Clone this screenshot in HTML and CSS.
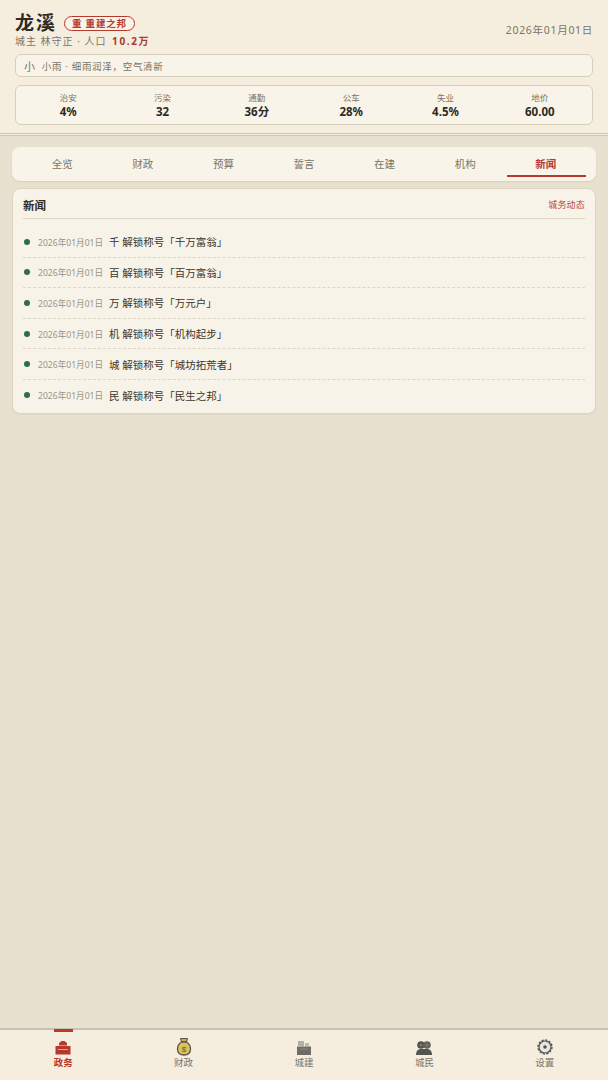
FILE: index.html
```html
<!DOCTYPE html>
<html lang="zh">
<head>
    <meta charset="utf-8">
    <title>龙溪</title>
    <link rel="stylesheet" href="styles.css">
</head>
<body>
    <div class="app">
        <header class="top">
            <div class="top-row">
                <div>
                    <div class="title-line">
                        <span class="city">龙溪</span>
                        <span class="badge">重 重建之邦</span>
                    </div>
                    <div class="sub">城主 林守正 · 人口 <b>10.2万</b></div>
                </div>
                <div class="date">2026年01月01日</div>
            </div>
            <div class="weather"><span class="weather-icon">小</span>小雨 · 细雨润泽，空气清新</div>
            <div class="stats">
                <div class="stat"><span>治安</span><b>4%</b></div>
                <div class="stat"><span>污染</span><b>32</b></div>
                <div class="stat"><span>通勤</span><b>36分</b></div>
                <div class="stat"><span>公车</span><b>28%</b></div>
                <div class="stat"><span>失业</span><b>4.5%</b></div>
                <div class="stat"><span>地价</span><b>60.00</b></div>
            </div>
        </header>

        <main class="content">
            <nav class="tabs">
                <div class="tab">全览</div>
                <div class="tab">财政</div>
                <div class="tab">预算</div>
                <div class="tab">誓言</div>
                <div class="tab">在建</div>
                <div class="tab">机构</div>
                <div class="tab active">新闻</div>
            </nav>

            <section class="panel">
                <div class="panel-head">
                    <h3>新闻</h3>
                    <span>城务动态</span>
                </div>
                <div class="news">
                    <div class="row"><i></i><span class="when">2026年01月01日</span><span class="what">千 解锁称号「千万富翁」</span></div>
                    <div class="row"><i></i><span class="when">2026年01月01日</span><span class="what">百 解锁称号「百万富翁」</span></div>
                    <div class="row"><i></i><span class="when">2026年01月01日</span><span class="what">万 解锁称号「万元户」</span></div>
                    <div class="row"><i></i><span class="when">2026年01月01日</span><span class="what">机 解锁称号「机构起步」</span></div>
                    <div class="row"><i></i><span class="when">2026年01月01日</span><span class="what">城 解锁称号「城坊拓荒者」</span></div>
                    <div class="row"><i></i><span class="when">2026年01月01日</span><span class="what">民 解锁称号「民生之邦」</span></div>
                </div>
            </section>
        </main>

        <footer class="nav">
            <div class="nav-item on">
                <svg width="18" height="18" viewBox="0 0 18 18">
                    <path d="M5 5.500 C5.500 4 7 4 7.500 3 H10.500 C11 4 12.500 4 13 5.500 V7.500 H5 Z" fill="#b5392c"/>
                    <path d="M1.500 8 H16.500 V16.500 H1.500 Z" fill="#b5392c"/>
                    <rect x="4" y="11" width="10" height="1" fill="#e3a898"/>
                </svg>
                <span>政务</span>
            </div>
            <div class="nav-item">
                <svg width="18" height="18" viewBox="0 0 18 18">
                    <path d="M5.500 0.500 H12.500 L11.500 4 H6.500 Z" fill="#c9ab55" stroke="#5c5545" stroke-width="1"/>
                    <path d="M6.500 4 H11.500 C14.500 6 15.500 8.500 15.500 11 C15.500 15 13 17 9 17 C5 17 2.500 15 2.500 11 C2.500 8.500 3.500 6 6.500 4 Z" fill="#dcc25c" stroke="#5c5545" stroke-width="1.300"/>
                    <text x="9" y="13.500" font-size="8" text-anchor="middle" fill="#6b5a20" font-family="Liberation Sans">$</text>
                </svg>
                <span>财政</span>
            </div>
            <div class="nav-item">
                <svg width="18" height="18" viewBox="0 0 18 18">
                    <rect x="3" y="3" width="6" height="5" fill="#b3afa4"/>
                    <rect x="10" y="5" width="4" height="3" fill="#bdb9ae"/>
                    <rect x="2" y="8.500" width="14" height="8.500" fill="#6f6c66"/>
                    <rect x="4.500" y="10.500" width="9" height="1" fill="#8d8a83"/>
                </svg>
                <span>城建</span>
            </div>
            <div class="nav-item">
                <svg width="18" height="18" viewBox="0 0 18 18">
                    <circle cx="6" cy="7" r="3.800" fill="#55534f"/>
                    <circle cx="12" cy="7" r="3.800" fill="#65635e"/>
                    <circle cx="6" cy="7" r="1.500" fill="#7c7a74"/>
                    <circle cx="12" cy="7" r="1.500" fill="#7c7a74"/>
                    <path d="M1 17 C1 13 3 11 6 11 H12 C15 11 17 13 17 17 Z" fill="#55534f"/>
                </svg>
                <span>城民</span>
            </div>
            <div class="nav-item">
                <svg width="18" height="18" viewBox="0 0 18 18">
                    <circle cx="9" cy="9" r="6" fill="#e8e6e0" stroke="#55534f" stroke-width="1.200"/>
                    <circle cx="9" cy="9" r="7" fill="none" stroke="#55534f" stroke-width="1.400" stroke-dasharray="2.200 1.460"/>
                    <circle cx="9" cy="9" r="1.800" fill="#55534f"/>
                </svg>
                <span>设置</span>
            </div>
        </footer>
    </div>
</body>
</html>
```

FILE: styles.css
```css
* {
    box-sizing: border-box;
}

body {
    margin: 0;
    font-family: "Noto Sans", "Noto Sans CJK SC", sans-serif;
    color: #2f2a22;
    background-color: #e8e1cf;
}

.app {
    display: flex;
    flex-direction: column;
    height: 1080px;
}

.top {
    height: 136px;
    padding: 11px 15px 0;
    background-color: #f5eedf;
    border-bottom: 3px double #cfc7b2;
}

.top-row {
    display: flex;
    justify-content: space-between;
    align-items: center;
    height: 37px;
}

.title-line {
    display: flex;
    align-items: center;
    gap: 7px;
    height: 24px;
}

.city {
    font-size: 19px;
    font-weight: 700;
    letter-spacing: 2px;
    line-height: 24px;
}

.badge {
    height: 15px;
    padding: 0 7px;
    font-size: 9.500px;
    font-weight: 700;
    line-height: 13px;
    letter-spacing: 0.8px;
    color: #b5392c;
    border: 1px solid #b5392c;
    border-radius: 8px;
    background-color: #f9f3e8;
}

.sub {
    font-size: 10px;
    line-height: 13px;
    letter-spacing: 1px;
    color: #7b7466;
}

.sub b {
    margin-left: 2px;
    color: #a93a2e;
    letter-spacing: 1.600px;
}

.date {
    font-size: 10.500px;
    color: #7b7466;
    letter-spacing: 0.7px;
}

.weather {
    display: flex;
    align-items: center;
    height: 23px;
    margin-top: 6px;
    padding-left: 8px;
    font-size: 9.500px;
    letter-spacing: 0.7px;
    color: #7b7466;
    background-color: #f8f4ea;
    border: 1px solid #d6cfba;
    border-radius: 6px;
}

.weather-icon {
    margin-right: 6px;
    font-size: 11px;
}

.stats {
    display: flex;
    height: 40px;
    margin-top: 8px;
    padding: 0 5px;
    background-color: #f8f4ea;
    border: 1px solid #d6cfba;
    border-radius: 6px;
}

.stat {
    flex: 1;
    display: flex;
    flex-direction: column;
    align-items: center;
    padding-top: 6px;
}

.stat span {
    font-size: 8.500px;
    line-height: 12px;
    color: #7b7466;
}

.stat b {
    font-size: 11.500px;
    line-height: 15px;
}

.content {
    flex: 1;
    padding: 11px 12px 0;
}

.tabs {
    display: flex;
    height: 34px;
    padding: 0 10px;
    background-color: #f8f4ea;
    border-radius: 8px;
    box-shadow: 0 1px 2px #d6cfba;
}

.tab {
    flex: 1;
    position: relative;
    font-size: 10.500px;
    line-height: 34px;
    text-align: center;
    color: #7b7466;
}

.tab.active {
    font-weight: 700;
    color: #b5392c;
}

.tab.active::after {
    content: "";
    position: absolute;
    left: 2px;
    right: 0;
    bottom: 4px;
    height: 2px;
    background-color: #b5392c;
}

.panel {
    height: 226px;
    margin-top: 7px;
    padding: 0 10px;
    background-color: #f8f3e9;
    border: 1px solid #ddd6c3;
    border-radius: 8px;
    box-shadow: 0 1px 1px #ddd6c3;
}

.panel-head {
    display: flex;
    justify-content: space-between;
    align-items: center;
    height: 30px;
    padding-top: 2px;
    border-bottom: 1px solid #ddd6c3;
}

.panel-head h3 {
    margin: 0;
    font-size: 11.500px;
    font-weight: 700;
}

.panel-head span {
    font-size: 9px;
    letter-spacing: 0.2px;
    color: #b5493c;
}

.news {
    padding-top: 8px;
}

.row {
    display: flex;
    align-items: center;
    height: 30.600px;
    border-bottom: 1px dashed #ddd6c3;
}

.row:last-child {
    border-bottom: none;
}

.row i {
    width: 6px;
    height: 6px;
    margin: 0 8px 0 1px;
    border-radius: 50%;
    background-color: #2f6b4f;
}

.when {
    width: 71px;
    padding-top: 1px;
    font-size: 8.600px;
    color: #9a9385;
}

.what {
    font-size: 10.500px;
    color: #3b362d;
}

.nav {
    display: flex;
    height: 52px;
    padding: 0 3px;
    background-color: #f5eedf;
    border-top: 2px solid #c9c2ae;
}

.nav-item {
    flex: 1;
    position: relative;
    display: flex;
    flex-direction: column;
    align-items: center;
    padding-top: 8px;
    font-size: 9.500px;
    line-height: 13px;
    color: #7b7466;
}

.nav-item.on {
    font-weight: 700;
    color: #b5392c;
}

.nav-item.on::before {
    content: "";
    position: absolute;
    top: -1px;
    width: 19px;
    height: 3px;
    background-color: #b5392c;
}
```
